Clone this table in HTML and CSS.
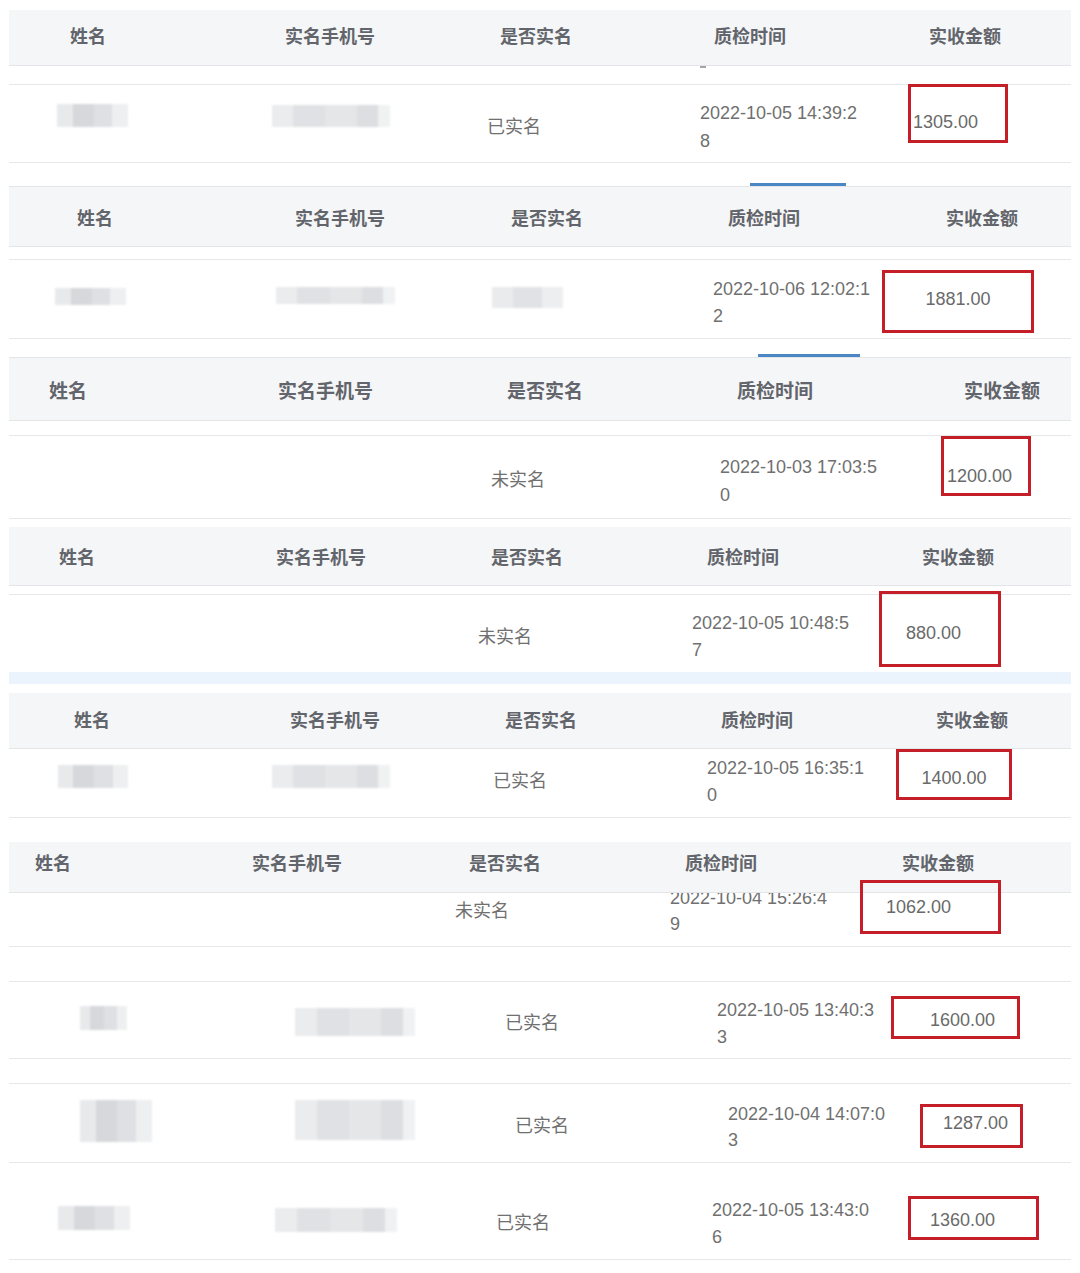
FILE: index.html
```html
<!DOCTYPE html>
<html lang="zh-CN">
<head>
<meta charset="utf-8">
<title>质检记录</title>
<link rel="stylesheet" href="styles.css">
</head>
<body>
<main class="page">

  <section class="strip s1">
    <div class="hd"><span>姓名</span><span>实名手机号</span><span>是否实名</span><span>质检时间</span><span>实收金额</span></div>
    <div class="sp sp1"><i class="cut"></i></div>
    <div class="tr r1">
      <div class="c"><i class="blur name"></i></div>
      <div class="c"><i class="blur phone"></i></div>
      <div class="c real">已实名</div>
      <div class="c date">2022-10-05 14:39:2<br>8</div>
      <div class="c"><span class="box">1305.00</span></div>
    </div>
  </section>

  <section class="strip s2">
    <div class="hd"><i class="tab"></i><span>姓名</span><span>实名手机号</span><span>是否实名</span><span>质检时间</span><span>实收金额</span></div>
    <div class="sp sp2"></div>
    <div class="tr r2">
      <div class="c"><i class="blur name"></i></div>
      <div class="c"><i class="blur phone"></i></div>
      <div class="c"><i class="blur realb"></i></div>
      <div class="c date">2022-10-06 12:02:1<br>2</div>
      <div class="c"><span class="box">1881.00</span></div>
    </div>
  </section>

  <section class="strip s3">
    <div class="hd"><i class="tab"></i><span>姓名</span><span>实名手机号</span><span>是否实名</span><span>质检时间</span><span>实收金额</span></div>
    <div class="sp sp3"></div>
    <div class="tr r3">
      <div class="c"></div>
      <div class="c"></div>
      <div class="c real">未实名</div>
      <div class="c date">2022-10-03 17:03:5<br>0</div>
      <div class="c"><span class="box">1200.00</span></div>
    </div>
  </section>

  <section class="strip s4">
    <div class="hd"><span>姓名</span><span>实名手机号</span><span>是否实名</span><span>质检时间</span><span>实收金额</span></div>
    <div class="sp sp4"></div>
    <div class="tr r4">
      <div class="c"></div>
      <div class="c"></div>
      <div class="c real">未实名</div>
      <div class="c date">2022-10-05 10:48:5<br>7</div>
      <div class="c"><span class="box">880.00</span></div>
    </div>
    <div class="band"></div>
  </section>

  <section class="strip s5">
    <div class="hd"><span>姓名</span><span>实名手机号</span><span>是否实名</span><span>质检时间</span><span>实收金额</span></div>
    <div class="tr r5">
      <div class="c"><i class="blur name"></i></div>
      <div class="c"><i class="blur phone"></i></div>
      <div class="c real">已实名</div>
      <div class="c date">2022-10-05 16:35:1<br>0</div>
      <div class="c"><span class="box">1400.00</span></div>
    </div>
  </section>

  <section class="strip s6">
    <div class="hd"><span>姓名</span><span>实名手机号</span><span>是否实名</span><span>质检时间</span><span>实收金额</span></div>
    <div class="tr r6">
      <div class="c"></div>
      <div class="c"></div>
      <div class="c real">未实名</div>
      <div class="c clip"><div class="date">2022-10-04 15:26:4<br>9</div></div>
      <div class="c"><span class="box">1062.00</span></div>
    </div>
  </section>

  <section class="strip s7">
    <div class="tr r7">
      <div class="c"><i class="blur name"></i></div>
      <div class="c"><i class="blur phone"></i></div>
      <div class="c real">已实名</div>
      <div class="c date">2022-10-05 13:40:3<br>3</div>
      <div class="c"><span class="box">1600.00</span></div>
    </div>
  </section>

  <section class="strip s8">
    <div class="tr r8">
      <div class="c"><i class="blur name"></i></div>
      <div class="c"><i class="blur phone"></i></div>
      <div class="c real">已实名</div>
      <div class="c date">2022-10-04 14:07:0<br>3</div>
      <div class="c"><span class="box">1287.00</span></div>
    </div>
    <div class="tr r9">
      <div class="c"><i class="blur name"></i></div>
      <div class="c"><i class="blur phone"></i></div>
      <div class="c real">已实名</div>
      <div class="c date">2022-10-05 13:43:0<br>6</div>
      <div class="c"><span class="box">1360.00</span></div>
    </div>
  </section>

</main>
</body>
</html>
```
FILE: styles.css
```css
* { box-sizing: border-box; }

body {
  margin: 0;
  background: #ffffff;
  font-family: "Liberation Sans", "Noto Sans CJK SC", sans-serif;
  color: #707070;
}

.page {
  padding: 10px 9px 0;
}

/* header bar */
.hd {
  position: relative;
  display: grid;
  align-items: center;
  background: #f5f6f7;
  border-bottom: 1px solid #e3e5e8;
  font-size: 18px;
  font-weight: bold;
  color: #62656b;
  white-space: nowrap;
  box-sizing: content-box;
}

.tab {
  position: absolute;
  top: -4px;
  height: 3px;
  background: #4a87c4;
}

/* spacer between header and row */
.sp {
  display: flex;
  border-bottom: 1px solid #e6e8ea;
  box-sizing: content-box;
}

.cut {
  margin-left: 691px;
  width: 6px;
  height: 2px;
  background: #a5a5a5;
}

/* body row */
.tr {
  display: grid;
  align-items: start;
  border-bottom: 1px solid #e6e8ea;
  font-size: 18px;
  white-space: nowrap;
  box-sizing: content-box;
}

.c { min-width: 0; }

.real {
  line-height: 27px;
  margin-top: calc(var(--ry) + 1px);
}

.date {
  line-height: var(--dl);
  margin-top: calc(var(--dy) + 1px);
}

.clip {
  overflow: hidden;
  height: 100%;
}

.box {
  position: relative;
  z-index: 1;
  display: block;
  margin-top: var(--bx);
  width: var(--bw);
  height: var(--bh);
  border: 3px solid #c41f29;
  padding-top: calc(var(--bt) + 2px);
  padding-left: var(--bl);
  line-height: 27px;
  text-align: var(--ba, left);
  color: #6a6a6a;
}

.blur {
  display: block;
  filter: blur(1.2px);
}

.name {
  margin-top: var(--ny);
  width: var(--nw);
  height: var(--nh);
  background: linear-gradient(90deg, #e8e9eb 0 22%, #d6d8db 22% 52%, #dfe0e3 52% 78%, #eeeff0 78% 100%);
}

.phone {
  margin-top: var(--py);
  width: var(--pw);
  height: var(--ph);
  background: linear-gradient(90deg, #ebecee 0 18%, #e0e1e4 18% 45%, #e5e6e8 45% 72%, #dcdee1 72% 90%, #f0f1f2 90% 100%);
}

.realb {
  margin-top: 27px;
  width: 71px;
  height: 21px;
  background: linear-gradient(90deg, #eaebed 0 30%, #e1e2e5 30% 70%, #edeeef 70% 100%);
}

.band {
  height: 12px;
  background: #ebf4fc;
}

/* ---------- strip 1 ---------- */
.s1 .hd {
  height: 50px;
  padding-bottom: 5px;
  padding-left: 61px;
  grid-template-columns: 215px 215px 214px 215px auto;
}
.sp1 { height: 18px; }
.r1 {
  height: 77px;
  padding-left: 48px;
  grid-template-columns: 215px 215px 213px 208px auto;
  --ny: 19px; --nw: 71px; --nh: 23px;
  --py: 20px; --pw: 118px; --ph: 22px;
  --ry: 28px;
  --dy: 13px; --dl: 28px;
  --bx: -1px; --bw: 100px; --bh: 59px; --bt: 20px; --bl: 2px;
}

/* ---------- strip 2 ---------- */
.s2 { margin-top: 23px; }
.s2 .hd {
  height: 59px;
  border-top: 1px solid #e3e5e8;
  padding-left: 68px;
  grid-template-columns: 218px 216px 217px 218px auto;
}
.s2 .tab { left: 741px; width: 96px; }
.sp2 { height: 12px; }
.r2 {
  height: 78px;
  padding-left: 46px;
  grid-template-columns: 221px 216px 221px 169px auto;
  --ny: 28px; --nw: 71px; --nh: 17px;
  --py: 27px; --pw: 119px; --ph: 17px;
  --dy: 15px; --dl: 27px;
  --bx: 10px; --bw: 152px; --bh: 63px; --bt: 11px; --bl: 0px; --ba: center;
}

/* ---------- strip 3 ---------- */
.s3 { margin-top: 18px; }
.s3 .hd {
  height: 62px;
  border-top: 1px solid #e3e5e8;
  padding-left: 40px;
  font-size: 19px;
  grid-template-columns: 229px 229px 230px 227px auto;
}
.s3 .tab { left: 749px; width: 102px; }
.sp3 { height: 14px; }
.r3 {
  height: 82px;
  grid-template-columns: 241px 241px 229px 221px auto;
  --ry: 30px;
  --dy: 16px; --dl: 28px;
  --bx: 0px; --bw: 90px; --bh: 60px; --bt: 22px; --bl: 3px;
}

/* ---------- strip 4 ---------- */
.s4 { margin-top: 8px; }
.s4 .hd {
  height: 58px;
  padding-left: 50px;
  grid-template-columns: 217px 215px 216px 215px auto;
}
.sp4 { height: 8px; }
.r4 {
  height: 77px;
  border-bottom: none;
  grid-template-columns: 234px 235px 214px 187px auto;
  --ry: 28px;
  --dy: 14px; --dl: 27px;
  --bx: -4px; --bw: 122px; --bh: 76px; --bt: 24px; --bl: 24px;
}

/* ---------- strip 5 ---------- */
.s5 { margin-top: 9px; }
.s5 .hd {
  height: 51px;
  padding-bottom: 4px;
  padding-left: 65px;
  grid-template-columns: 216px 215px 216px 215px auto;
}
.r5 {
  height: 68px;
  padding-left: 49px;
  grid-template-columns: 214px 221px 214px 189px auto;
  --ny: 16px; --nw: 70px; --nh: 23px;
  --py: 16px; --pw: 118px; --ph: 23px;
  --ry: 18px;
  --dy: 5px; --dl: 27px;
  --bx: 0px; --bw: 116px; --bh: 51px; --bt: 11px; --bl: 0px; --ba: center;
}

/* ---------- strip 6 ---------- */
.s6 { margin-top: 24px; }
.s6 .hd {
  height: 40px;
  padding-bottom: 10px;
  padding-left: 26px;
  grid-template-columns: 217px 217px 216px 217px auto;
}
.r6 {
  height: 53px;
  grid-template-columns: 223px 223px 215px 190px auto;
  --ry: 4px;
  --dy: -9px; --dl: 26px;
  --bx: -13px; --bw: 141px; --bh: 54px; --bt: 9px; --bl: 23px;
}

/* ---------- row 7 ---------- */
.s7 { margin-top: 34px; }
.r7 {
  height: 76px;
  border-top: 1px solid #e6e8ea;
  padding-left: 71px;
  grid-template-columns: 215px 210px 212px 174px auto;
  --ny: 24px; --nw: 47px; --nh: 24px;
  --py: 26px; --pw: 120px; --ph: 28px;
  --ry: 27px;
  --dy: 14px; --dl: 27px;
  --bx: 14px; --bw: 129px; --bh: 43px; --bt: 6px; --bl: 36px;
}

/* ---------- rows 8 and 9 ---------- */
.s8 { margin-top: 24px; }
.r8 {
  height: 78px;
  border-top: 1px solid #e6e8ea;
  padding-left: 71px;
  grid-template-columns: 215px 220px 213px 192px auto;
  --ny: 16px; --nw: 72px; --nh: 42px;
  --py: 16px; --pw: 120px; --ph: 40px;
  --ry: 28px;
  --dy: 16px; --dl: 26px;
  --bx: 20px; --bw: 103px; --bh: 44px; --bt: 1px; --bl: 20px;
}
.r9 {
  height: 96px;
  padding-left: 49px;
  grid-template-columns: 217px 221px 216px 196px auto;
  --ny: 43px; --nw: 72px; --nh: 24px;
  --py: 45px; --pw: 122px; --ph: 24px;
  --ry: 46px;
  --dy: 33px; --dl: 27px;
  --bx: 33px; --bw: 131px; --bh: 44px; --bt: 6px; --bl: 19px;
}
```
